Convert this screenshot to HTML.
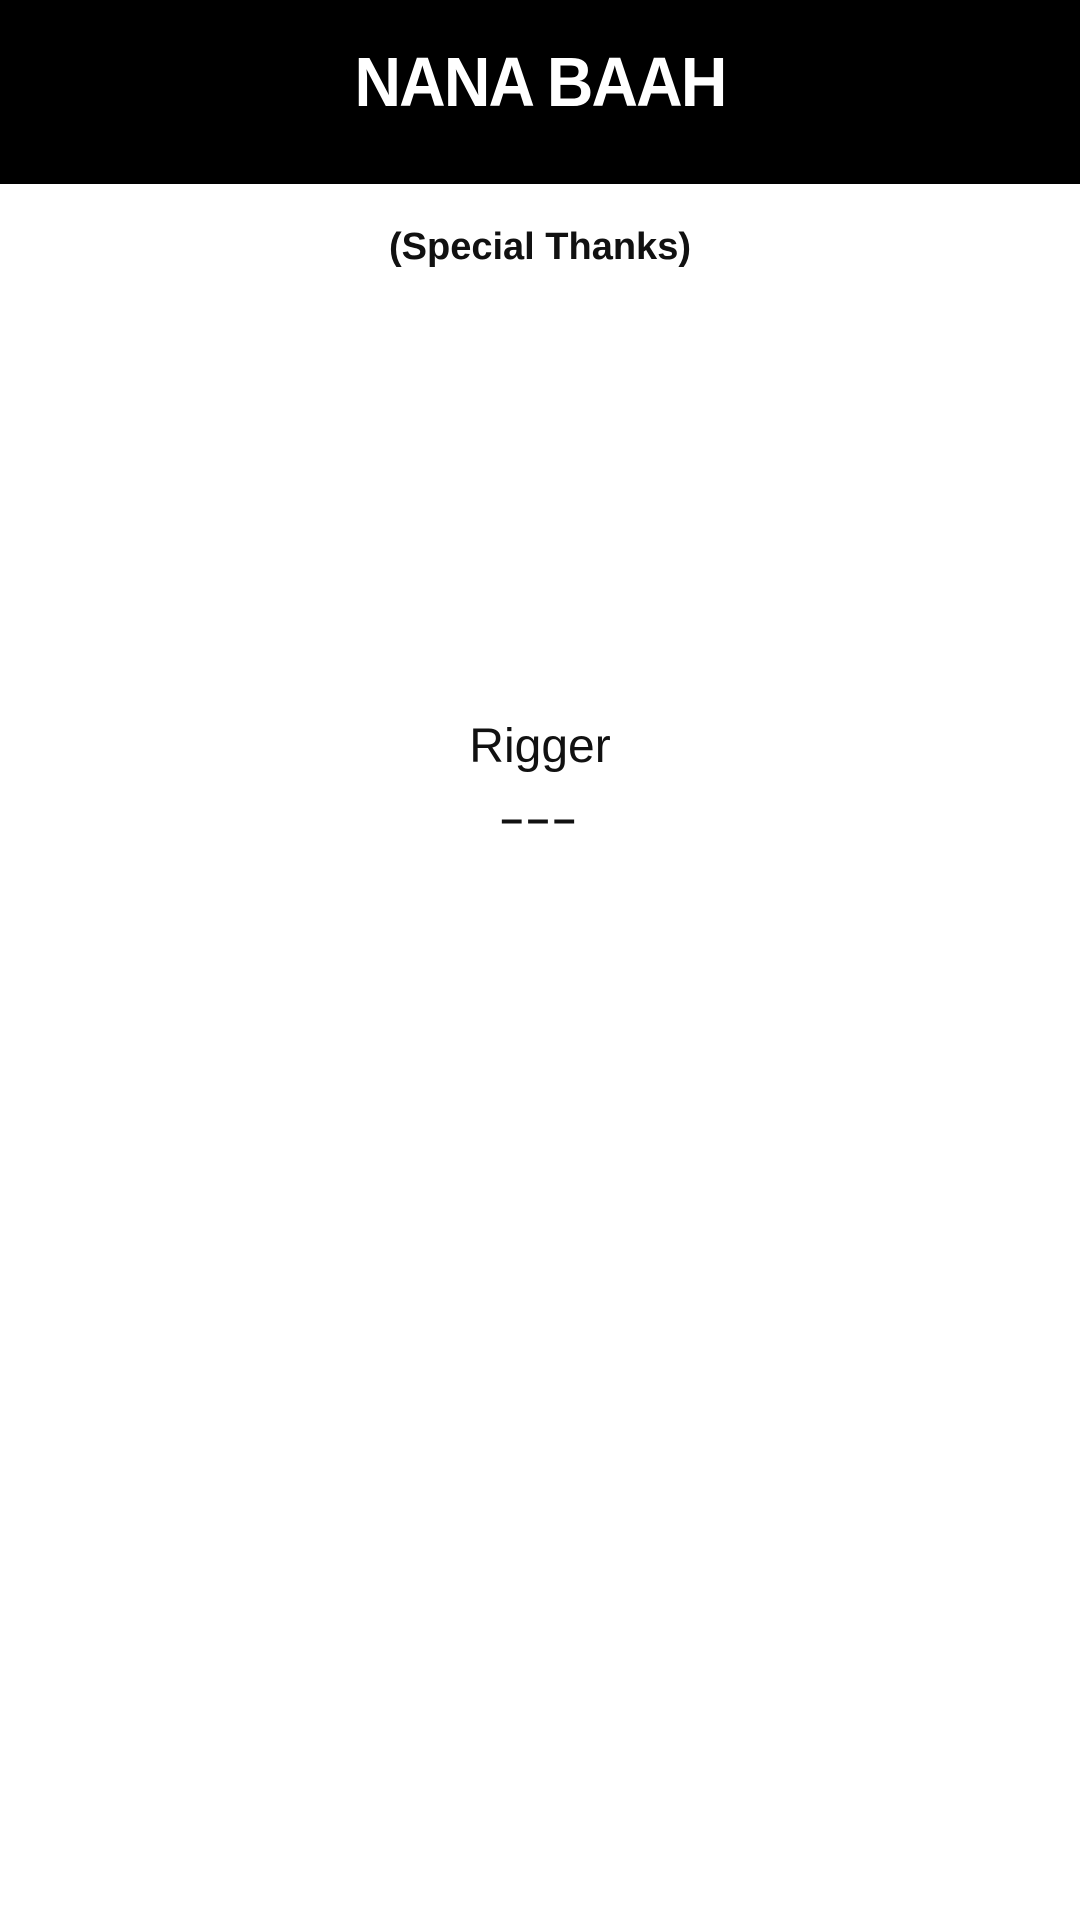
<!DOCTYPE html>
<html>
<head>
<meta charset="utf-8">
<style>
html,body{margin:0;padding:0;background:#fff;}
body{width:1080px;height:1920px;position:relative;overflow:hidden;font-family:"Liberation Sans",sans-serif;}
.hdr{position:absolute;left:0;top:0;width:1080px;height:184px;background:#000;}
.t{position:absolute;left:0;width:1080px;text-align:center;white-space:nowrap;}
.title{top:40px;font-size:70px;font-weight:bold;color:#fff;line-height:84px;letter-spacing:-2px;transform:scaleX(0.92);}
.sub{top:224px;font-size:38px;font-weight:bold;color:#111;line-height:46px;}
.role{top:718px;font-size:48px;color:#111;line-height:58px;}
.dash{top:790px;font-size:40px;font-weight:bold;color:#111;line-height:58px;letter-spacing:4px;}
</style>
</head>
<body>
<div class="hdr"></div>
<div class="t title">NANA BAAH</div>
<div class="t sub">(Special Thanks)</div>
<div class="t role">Rigger</div>
<div class="t dash">–––</div>
</body>
</html>
